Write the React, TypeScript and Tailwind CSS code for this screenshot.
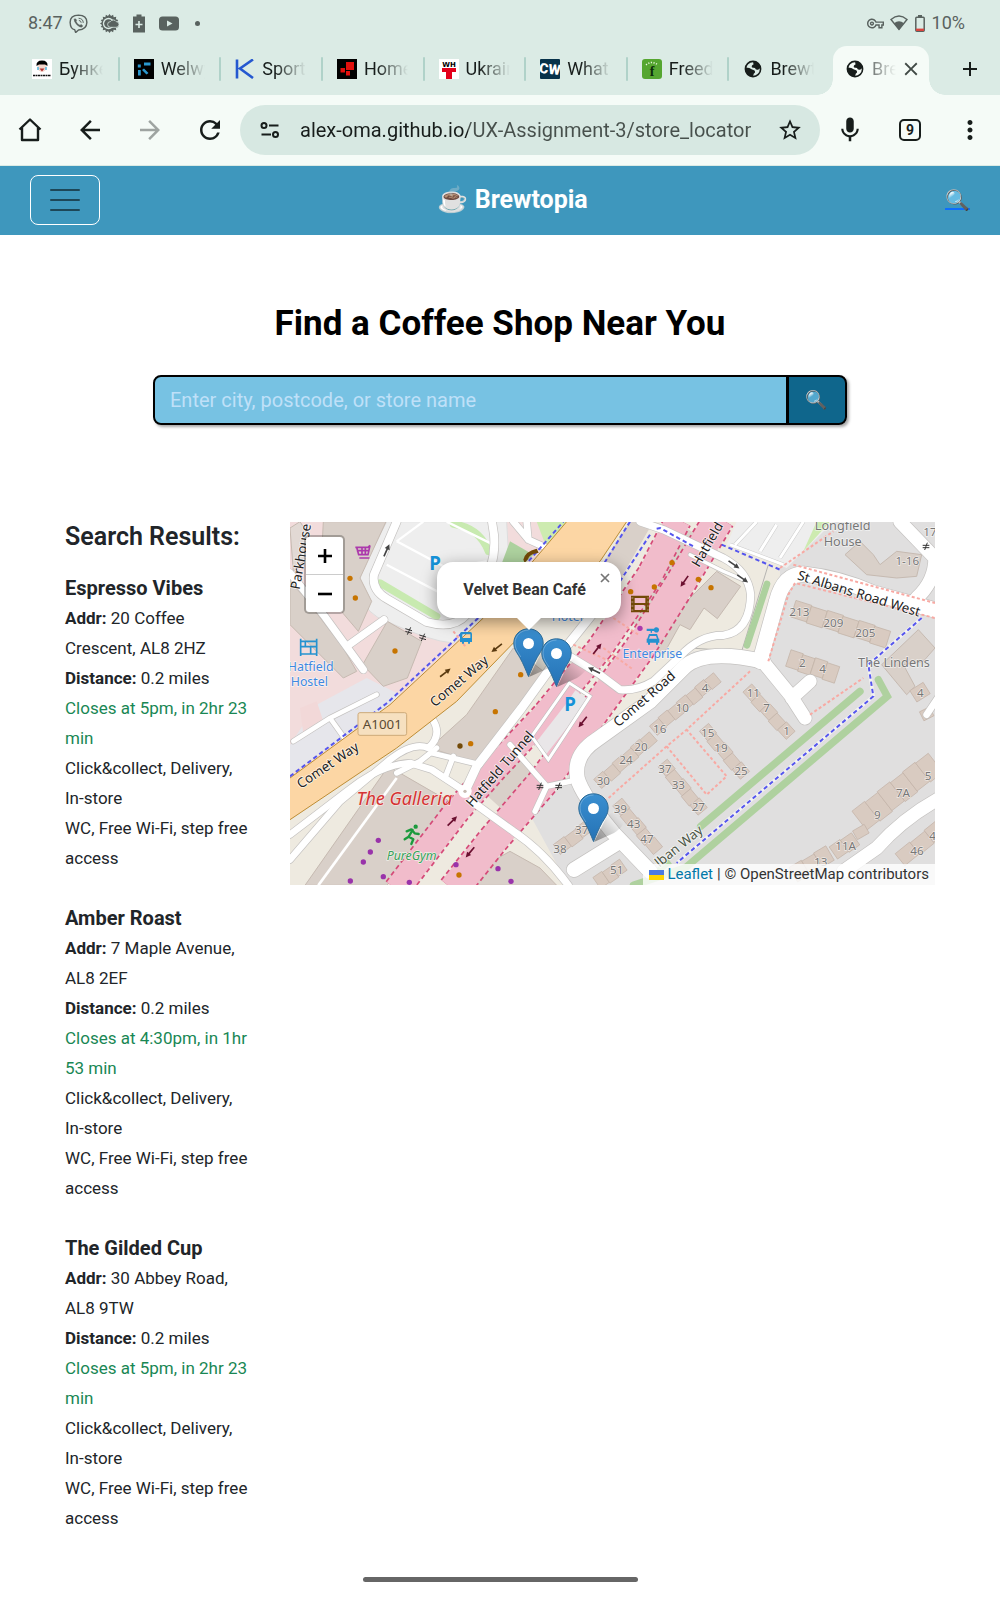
import type { ReactNode } from "react";
import {
  MdAdd,
  MdArrowBack,
  MdArrowForward,
  MdClose,
  MdMic,
  MdMoreVert,
  MdOutlineVpnKey,
  MdRefresh,
  MdStarBorder,
} from "react-icons/md";

/* ---------- Status bar ---------- */

const teeth = Array.from({ length: 32 }, (_, i) => {
  const r = i % 2 ? 8 : 10;
  const a = (i / 32) * Math.PI * 2;
  return `${(10 + r * Math.cos(a)).toFixed(1)},${(10 + r * Math.sin(a)).toFixed(1)}`;
}).join(" ");

function StatusBar() {
  return (
    <div className="flex h-[46px] items-center px-7 text-lg text-[#59625f]">
      <span>8:47</span>
      <svg className="ml-1.5 size-[19px]" viewBox="0 0 20 20" fill="none" stroke="currentColor" strokeWidth="1.500" strokeLinecap="round" strokeLinejoin="round">
        <path d="M6 16.500Q1.500 16 1.200 9Q1 1.500 10 1.200Q19 1.500 18.800 9Q18.500 16.500 10 16.800L7 19.500z" />
        <path d="M5.500 5.500Q7 4 8 6.500L7.500 8Q8.500 10.800 11.500 11.800L13 11Q15.500 12.500 13.500 13.800Q12 14.500 8.500 11.500Q5 8 5.500 5.500z" fill="currentColor" strokeWidth="0.500" />
        <path d="M10.500 4.500Q15 4.800 15 9M10.800 6.800Q12.800 7 12.800 8.800" strokeWidth="1" />
      </svg>
      <svg className="ml-3 size-[19px]" viewBox="0 0 20 20">
        <polygon points={teeth} fill="currentColor" />
        <circle cx="9" cy="10" r="6" fill="#dbebe5" />
        <circle cx="9" cy="10" r="4.600" fill="currentColor" />
        <path d="M8 11a3 3 0 0 1 3-3 3.500 3.500 0 0 1 6 0 3 3 0 0 1 0 6h-6a3 3 0 0 1-3-3z" fill="currentColor" stroke="#dbebe5" strokeWidth="0.800" />
      </svg>
      <svg className="ml-3.5 h-[19px] w-3" viewBox="0 0 12 18">
        <path d="M3.500 0h5v2H12v16H0V2h3.500z" fill="currentColor" />
        <path d="M6 6.500v7M2.500 10h7" stroke="#dbebe5" strokeWidth="1.600" />
      </svg>
      <svg className="ml-3.5 h-[15px] w-5" viewBox="0 0 20 14">
        <rect width="20" height="14" rx="3.500" fill="currentColor" />
        <path d="M8 4l5.500 3L8 10z" fill="#dbebe5" />
      </svg>
      <span className="ml-4 size-[5px] rounded-full bg-current" />
      <span className="flex-1" />
      <MdOutlineVpnKey className="size-[17px]" />
      <svg className="ml-1.5 h-4 w-[18px]" viewBox="0 0 18 16">
        <path d="M1 4.500Q9-2.500 17 4.500L9 14.500z" fill="none" stroke="currentColor" strokeWidth="1.400" />
        <path d="M4 8.200Q9 4.500 14 8.200L9 15z" fill="currentColor" />
      </svg>
      <svg className="mx-[7px] h-[17px] w-2.5" viewBox="0 0 10 17">
        <path d="M3 1h4" stroke="currentColor" strokeWidth="2" />
        <rect x="0.800" y="2.300" width="8.400" height="13.900" rx="1" fill="none" stroke="currentColor" strokeWidth="1.500" />
        <path d="M1 14.800h8" stroke="#d9453f" strokeWidth="2.400" />
      </svg>
      <span className="mr-[7px]">10%</span>
    </div>
  );
}

/* ---------- Tab strip ---------- */

function Globe() {
  return (
    <svg className="size-5" viewBox="0 0 20 20">
      <circle cx="10" cy="10" r="7.600" fill="none" stroke="currentColor" strokeWidth="1.600" />
      <path d="M10 2Q15.500 2.500 17.800 8.500L15.500 10.500Q12.500 11.500 12 9L9 8.500Q8 6.500 10.500 5.500z" fill="currentColor" />
      <path d="M2.500 8.500Q7 8.500 9 10.500Q12.500 11 12 13.500Q10.500 14 10 17.500Q4 17 2.500 12z" fill="currentColor" />
    </svg>
  );
}

const tabs: { title: string; icon: ReactNode }[] = [
  {
    title: "Бунке",
    icon: (
      <svg className="size-5" viewBox="0 0 20 20">
        <rect width="20" height="20" fill="#fff" />
        <ellipse cx="10" cy="8" rx="4.500" ry="5" fill="#f4d6cc" />
        <path d="M4.500 7Q4 1.500 10 1.500T15.500 7L13 5.500H7z" fill="#000" />
        <path d="M7.500 9.500h5L10 12.500z" fill="#b23030" />
        <path d="M6 8v3M14 8v3" stroke="#4db6e0" strokeWidth="1.500" />
        <path d="M1 16.500h18" stroke="#111" strokeWidth="1.600" strokeDasharray="2 .5" />
      </svg>
    ),
  },
  {
    title: "Welwy",
    icon: (
      <svg className="size-5" viewBox="0 0 20 20">
        <rect width="20" height="20" fill="#000" />
        <path d="M10 3.500h6.500v3H10zM4 11h2.800v5.500H4zM3.800 5.500h3v3h-3zM10 9.500l4.500 4.500-2 1.500L8 11z" fill="#2a98cf" />
      </svg>
    ),
  },
  {
    title: "Sport",
    icon: (
      <svg className="size-5" viewBox="0 0 20 20" fill="none" stroke="#2558d0" strokeWidth="2.600">
        <path d="M2 .5v19M18 .5L5 9.500l13 9.500" />
      </svg>
    ),
  },
  {
    title: "Home",
    icon: (
      <svg className="size-5" viewBox="0 0 20 20">
        <rect width="20" height="20" fill="#000" />
        <path d="M9 3h8v8H9zM3.500 9h4.500v4.500H3.500zM9 12h4v4.500H9z" fill="#e2100d" />
      </svg>
    ),
  },
  {
    title: "Ukrain",
    icon: (
      <svg className="size-5" viewBox="0 0 20 20">
        <rect width="20" height="20" fill="#fff" />
        <text x="10" y="7.500" textAnchor="middle" fontSize="7" fontWeight="900" fontFamily="DejaVu Sans, sans-serif">WH</text>
        <path d="M3 9h14v4h-4v7H7v-7H3z" fill="#e3001b" />
      </svg>
    ),
  },
  {
    title: "What",
    icon: (
      <svg className="size-5" viewBox="0 0 20 20">
        <rect width="20" height="20" rx="1" fill="#07324a" />
        <text x="10" y="15" textAnchor="middle" fontSize="14" fontWeight="900" fill="#fff" fontFamily="Roboto, sans-serif" transform="rotate(6 10 10)">CW</text>
      </svg>
    ),
  },
  {
    title: "Freed",
    icon: (
      <svg className="size-5" viewBox="0 0 20 20">
        <rect width="20" height="20" rx="3" fill="#55a630" />
        <path d="M4 6Q10 1 16 6" fill="none" stroke="#e8f5df" strokeWidth="1.500" strokeDasharray="1.200 1.500" />
        <text x="10" y="17" textAnchor="middle" fontSize="14" fontWeight="700" fill="#0d2b0b" fontFamily="Liberation Serif, serif">f</text>
      </svg>
    ),
  },
  { title: "Brewt", icon: <Globe /> },
];

function TabStrip() {
  return (
    <div className="flex h-[49px] items-stretch pl-[18px] text-lg text-[#171d1b]">
      {tabs.map((tab, i) => (
        <button key={i} className="flex min-w-0 flex-1 items-center pl-3.5 pb-1 text-left">
          <span className="mr-[7px] shrink-0">{tab.icon}</span>
          <span className="w-11 overflow-hidden whitespace-nowrap [mask-image:linear-gradient(to_right,black_30%,transparent)]">
            {tab.title}
          </span>
          {i < tabs.length - 1 && <span className="ml-auto h-6 w-[2px] rounded bg-[#b0d2c9]" />}
        </button>
      ))}
      <div className="flex w-[100px] items-stretch">
        <div className="relative mx-[2px] flex flex-1 items-center rounded-t-[14px] bg-[#f5fbf7] pl-3 pb-1">
          <span className="absolute bottom-0 -left-4 size-4 bg-[radial-gradient(circle_at_0_0,transparent_15.5px,#f5fbf7_16px)]" />
          <span className="absolute bottom-0 -right-4 size-4 bg-[radial-gradient(circle_at_100%_0,transparent_15.5px,#f5fbf7_16px)]" />
          <span className="mr-[7px] shrink-0">
            <Globe />
          </span>
          <span className="w-6 overflow-hidden whitespace-nowrap [mask-image:linear-gradient(to_right,rgba(0,0,0,.6),transparent)]">
            Bre
          </span>
          <button aria-label="Close tab" className="ml-1 text-[#404945]">
            <MdClose className="size-[22px]" />
          </button>
        </div>
      </div>
      <button aria-label="New tab" className="flex w-[69px] items-center justify-center pb-1 pl-2">
        <MdAdd className="size-6" />
      </button>
    </div>
  );
}

/* ---------- Address bar ---------- */

function Toolbar() {
  return (
    <div className="flex h-[70px] items-center bg-[#f5fbf7] text-[#171d1b]">
      <button aria-label="Home" className="flex w-[60px] justify-center">
        <svg className="size-[30px]" viewBox="0 0 30 30" fill="none" stroke="currentColor" strokeWidth="2.400" strokeLinejoin="round">
          <path d="M4.500 14.500L15 4.500l10.500 10" />
          <path d="M7 12.500V25h16V12.500" />
        </svg>
      </button>
      <button aria-label="Back" className="flex w-[60px] justify-center">
        <MdArrowBack className="size-[30px]" />
      </button>
      <button aria-label="Forward" className="flex w-[60px] justify-center text-[#9ea4a1]">
        <MdArrowForward className="size-[30px]" />
      </button>
      <button aria-label="Reload" className="flex w-[60px] justify-center">
        <MdRefresh className="size-[30px]" />
      </button>
      <div className="flex h-[50px] min-w-0 flex-1 items-center rounded-full bg-[#d7e8e2] pr-[17px] pl-5">
        <button aria-label="Site settings">
          <svg className="h-4 w-5" viewBox="0 0 20 16" fill="none" stroke="currentColor" strokeWidth="2">
            <circle cx="4" cy="3.500" r="2.500" />
            <path d="M9 3.500h9.500M1.500 12.500H11" />
            <circle cx="15.500" cy="12.500" r="2.500" />
          </svg>
        </button>
        <input
          aria-label="Address"
          readOnly
          value="alex-oma.github.io/UX-Assignment-3/store_locator"
          className="ml-5 min-w-0 flex-1 bg-linear-[to_right,#171d1b_168px,#47504c_168px] bg-clip-text text-xl text-transparent outline-none"
        />
        <button aria-label="Bookmark" className="ml-[23px]">
          <MdStarBorder className="size-[26px]" />
        </button>
      </div>
      <button aria-label="Voice search" className="flex w-[60px] justify-center">
        <MdMic className="size-[30px]" />
      </button>
      <button aria-label="Open tabs" className="flex w-[60px] justify-center">
        <span className="flex size-[22px] items-center justify-center rounded-[5px] border-2 border-current text-sm font-bold">9</span>
      </button>
      <button aria-label="More" className="flex w-[60px] justify-center">
        <MdMoreVert className="size-[30px]" />
      </button>
    </div>
  );
}

/* ---------- Site header and search ---------- */

function SiteHeader() {
  return (
    <header className="mt-px flex h-[69px] items-center justify-between bg-[#3e97bd] px-[30px] pb-0.5">
      <button aria-label="Menu" className="flex h-[50px] w-[70px] flex-col items-center justify-center gap-2 rounded-lg border border-white">
        <span className="h-0.5 w-[30px] rounded bg-[#1d4758]" />
        <span className="h-0.5 w-[30px] rounded bg-[#1d4758]" />
        <span className="h-0.5 w-[30px] rounded bg-[#1d4758]" />
      </button>
      <a href="#home" className="mr-5 text-[25px] font-bold whitespace-nowrap text-white">
        ☕ Brewtopia
      </a>
      <a href="#search" aria-label="Search" className="text-xl text-[#0d6efd] underline decoration-2">
        🔍
      </a>
    </header>
  );
}

function StoreSearch() {
  return (
    <section className="px-[153px] pt-[66px]">
      <h1 className="text-center text-[35px] leading-[46px] font-bold text-black">Find a Coffee Shop Near You</h1>
      <form className="mt-7 flex h-[50px] rounded-lg shadow-[2px_2px_3px_rgba(0,0,0,.35)]" onSubmit={(e) => e.preventDefault()}>
        <input
          aria-label="Enter city, postcode, or store name"
          placeholder="Enter city, postcode, or store name"
          className="min-w-0 flex-1 rounded-l-lg border-2 border-black bg-[#77c2e3] px-[15px] text-xl text-black outline-none placeholder:text-[#bfe0f8]"
        />
        <button aria-label="Search" className="w-[59px] rounded-r-lg border-2 border-l border-black bg-[#0f668c] text-lg">
          🔍
        </button>
      </form>
    </section>
  );
}

/* ---------- Results ---------- */

const stores = [
  { name: "Espresso Vibes", addr: "20 Coffee Crescent, AL8 2HZ", closes: "Closes at 5pm, in 2hr 23 min" },
  { name: "Amber Roast", addr: "7 Maple Avenue, AL8 2EF", closes: "Closes at 4:30pm, in 1hr 53 min" },
  { name: "The Gilded Cup", addr: "30 Abbey Road, AL8 9TW", closes: "Closes at 5pm, in 2hr 23 min" },
];

function Results() {
  return (
    <section>
      <h2 className="mb-[21px] text-[25px] leading-[30px] font-semibold whitespace-nowrap">Search Results:</h2>
      <ul className="flex flex-col gap-[30px] pr-2">
        {stores.map((s) => (
          <li key={s.name} className="text-[17px] leading-[30px]">
            <h3 className="text-xl leading-[30px] font-bold">{s.name}</h3>
            <p>
              <strong>Addr:</strong> {s.addr}
            </p>
            <p>
              <strong>Distance:</strong> 0.2 miles
            </p>
            <p className="text-[#198754]">{s.closes}</p>
            <p>
              Click&amp;collect, Delivery, <span className="whitespace-nowrap">In-store</span>
            </p>
            <p>WC, Free Wi-Fi, step free access</p>
          </li>
        ))}
      </ul>
    </section>
  );
}

/* ---------- Map ---------- */

type Line = [number, number, number, number];

/* A terrace of n houses along the line from (x1, y1) to (x2, y2). */
function Terrace({ at, w = 36, n = 5 }: { at: Line; w?: number; n?: number }) {
  const [x1, y1, x2, y2] = at;
  const len = Math.hypot(x2 - x1, y2 - y1);
  const angle = (Math.atan2(y2 - y1, x2 - x1) * 180) / Math.PI;
  return (
    <g transform={`translate(${x1} ${y1}) rotate(${angle})`} fill="#d9cbc1" stroke="#c2b2a7" strokeWidth="2">
      {Array.from({ length: n }, (_, i) => (
        <rect key={i} x={(i * len) / n} y={-w / 2 + (i % 2) * 3} width={len / n} height={w} />
      ))}
    </g>
  );
}

const terraces: { at: Line; w?: number; n?: number }[] = [
  { at: [1540, 282, 1825, 372], w: 52, n: 6 },
  { at: [1525, 430, 1672, 478], w: 52, n: 4 },
  { at: [1312, 488, 1120, 648], n: 7 },
  { at: [1120, 665, 955, 810], n: 6 },
  { at: [1402, 520, 1532, 662], n: 5 },
  { at: [1272, 638, 1395, 782], n: 5 },
  { at: [1148, 745, 1268, 890], n: 5 },
  { at: [1012, 862, 1134, 1008], n: 5 },
  { at: [830, 1005, 930, 930], n: 3 },
  { at: [950, 1105, 1030, 1050], w: 40, n: 3 },
  { at: [1738, 918, 1965, 742], w: 72, n: 6 },
  { at: [1660, 1015, 1725, 970], w: 44, n: 2 },
  { at: [1540, 1080, 1650, 1015], w: 50, n: 3 },
  { at: [1860, 1035, 1990, 930], w: 46, n: 3 },
  { at: [1725, 962, 1760, 942], w: 30, n: 1 },
  { at: [1900, 545, 1940, 520], w: 40, n: 1 },
  { at: [1925, 605, 1955, 590], w: 30, n: 1 },
];

const houseNumbers: [number, number, string][] = [
  [1558, 305, "213"], [1660, 338, "209"], [1756, 368, "205"], [1567, 457, "2"], [1628, 474, "4"],
  [1275, 533, "4"], [1207, 592, "10"], [1139, 655, "16"], [1083, 708, "20"], [1038, 749, "24"],
  [970, 811, "30"], [1420, 546, "11"], [1460, 591, "7"], [1520, 662, "1"], [1283, 667, "15"],
  [1323, 712, "19"], [1383, 782, "25"], [1155, 776, "37"], [1195, 822, "33"], [1255, 890, "27"],
  [1021, 895, "39"], [1061, 941, "43"], [1101, 985, "47"], [905, 958, "37"], [840, 1015, "38"],
  [1010, 1077, "51"], [1622, 1054, "13"], [1697, 1006, "11A"], [1792, 912, "9"], [1869, 846, "7A"],
  [1944, 796, "5"], [1911, 1020, "46"], [1958, 977, "4"], [1921, 548, "4"], [1882, 152, "1-16"], [1950, 64, "17"],
];

const poiDots: [number, number, string][] = [
  [210, 191, "#c77400"], [226, 250, "#c77400"], [345, 409, "#c77400"], [722, 480, "#c77400"],
  [646, 591, "#c77400"], [572, 687, "#c77400"], [540, 694, "#734a08"], [537, 1081, "#c77400"],
  [1176, 144, "#c77400"], [1255, 194, "#c77400"], [1293, 219, "#c77400"], [1123, 217, "#c77400"],
  [1052, 231, "#c77400"], [1080, 341, "#ac39ac"], [295, 977, "#93a"], [271, 1012, "#93a"], [250, 1042, "#93a"],
  [211, 1099, "#93a"], [310, 1086, "#93a"], [388, 1103, "#93a"], [528, 1050, "#93a"], [654, 1062, "#93a"], [693, 1100, "#93a"],
];

const arrows: [number, number, number, string][] = [
  [320, 107, -66, "#444"], [650, 400, 142, "#5a3a10"], [496, 474, -38, "#5a3a10"], [952, 402, -52, "#6b1030"],
  [942, 467, 205, "#444"], [1362, 150, 35, "#444"], [1388, 192, 35, "#444"], [1213, 200, 125, "#6b1030"],
  [908, 622, 128, "#6b1030"], [517, 919, -45, "#6b1030"], [570, 1013, 130, "#6b1030"],
];

const roads: [string, number][] = [
  ["M30 175L130 300L250 465M205 392L312 315", 22],
  ["M350 21L282 180Q274 225 320 252L440 322Q520 345 560 300L600 225Q650 150 642 60L636 21", 24],
  ["M700 21L745 75L800 100M745 75L740 21", 20],
  ["M150 610L200 680M150 610L40 680M150 610L290 540", 14],
  ["M30 960L200 830Q300 750 390 745L455 765L555 830", 20],
  ["M30 1035L180 860L330 735Q400 680 445 700Q490 660 455 610", 20],
  ["M350 775L420 740L470 700M455 715L600 750M520 725L495 790", 16],
  ["M960 270L840 420L725 580L590 755L555 830", 26],
  ["M575 860L700 950Q790 1010 865 1112", 22],
  ["M870 425L960 480L1020 525Q1070 530 1120 500L1200 425Q1260 360 1330 362Q1410 350 1412 240Q1405 170 1330 130L1150 45L1080 21", 22],
  ["M1230 120L1330 170L1400 200", 10],
  ["M690 690L800 815L870 800M800 815L765 890", 16],
  ["M1450 440Q1270 400 1210 460L1110 560L950 675Q880 720 892 790Q905 840 1000 955L1110 1070", 44],
  ["M882 1065L1020 980", 44],
  ["M1440 440L1490 260Q1510 180 1570 178Q1680 190 1780 235L1980 290", 46],
  ["M1440 430L1530 540L1575 610M1535 550L1590 500", 40],
  ["M1860 21L1965 130Q1965 200 1910 250", 40],
  ["M1980 850Q1870 910 1790 1000L1690 1070", 40],
  ["M1940 600L1980 540", 20],
];

const carriageways: [string, number][] = [
  ["M350 1125L530 890L640 765L795 600L960 400L1110 180L1195 15", 74],
  ["M520 1125L640 975L790 800L935 600L1080 400L1205 200L1318 10", 88],
];

function StreetMap() {
  return (
    <svg className="block h-full w-full" viewBox="30 21 1935 1091" preserveAspectRatio="xMidYMid slice" aria-hidden="true">
      <rect width="2000" height="1200" fill="#e0dfdf" />
      <polygon points="30,21 860,21 610,310 330,570 30,790" fill="#f2dcdc" />
      <polygon points="30,690 110,570 260,490 370,545 30,780" fill="#e6e6eb" />
      <polygon points="60,580 110,560 130,620 70,660" fill="#f2d8d8" />
      <polygon points="30,915 530,560 1040,21 1500,21 1500,200 1440,420 1240,410 960,660 880,700 860,800 750,900 865,1112 30,1112" fill="#eeeae0" />
      <polygon points="1120,21 1000,230 930,300 870,300 1050,21" fill="#d9d0c9" />

      {/* car park */}
      <path d="M240 180L240 240Q260 300 320 320Q450 380 520 385Q590 350 690 200L680 21H320z" fill="#eeeeee" stroke="#ddd" strokeWidth="3" />
      <g stroke="#c8eab0" strokeWidth="22" strokeLinecap="round" fill="none">
        <path d="M300 205L470 305M520 28Q600 40 625 110" />
      </g>
      <g stroke="#fff" strokeWidth="7" fill="none">
        <path d="M350 80L500 160L620 140M320 150L500 245L560 250M430 21L350 80M500 21L640 90" />
      </g>
      <polygon points="690,80 760,120 720,160 660,160" fill="#add19e" />
      <polygon points="770,21 860,21 800,100" fill="#cdebb0" />

      {/* large buildings */}
      <g fill="#d9d0c9" stroke="#c6bab1" strokeWidth="3">
        <polygon points="130,21 318,21 240,190 275,260 235,350 120,215" />
        <polygon points="30,200 75,250 190,400 230,470 190,490 30,330" />
        <polygon points="322,320 425,380 382,490 310,515 248,450" />
        <polygon points="30,40 60,21 110,100 40,170" fill="#e2d9d4" />
        <polygon points="700,400 790,470 820,450 590,745 450,700 560,600" />
        <polygon points="325,755 455,830 545,880 430,1000 320,1112 75,1112" />
        <polygon points="690,1010 780,1060 830,1112 560,1112 600,1060" />
        <polygon points="1310,170 1382,215 1312,312 1272,280 1230,345 1200,330 1150,420 1100,380" />
        <polygon points="1740,80 1780,120 1800,150 1850,110 1925,120 1910,185 1850,190 1760,180 1695,120" />
        <polygon points="1805,450 1915,345 1965,400 1930,440 1870,450 1905,515 1880,540" />
      </g>
      <path d="M350 790L115 1112" stroke="#fff" strokeWidth="8" />
      <path d="M740 750L640 860M1250 60L1080 340" stroke="#d9d0c9" strokeWidth="70" />

      {/* car parks and grass to the north-east */}
      <path d="M1370 21H1660L1520 160L1340 90z" fill="#eeeeee" />
      <path d="M1430 21L1365 90M1490 30L1440 110M1570 21L1500 130M1350 90L1510 150" stroke="#ccc" strokeWidth="12" />
      <path d="M1430 21L1365 90M1490 30L1440 110M1570 21L1500 130M1350 90L1510 150" stroke="#fff" strokeWidth="9" />
      <path d="M1570 110L1650 21H1610z" fill="#cdebb0" />
      <path d="M1465 150L1385 410L1230 400" fill="none" stroke="#999" strokeWidth="2" />
      <path d="M1461 208L1401 392" stroke="#add19e" strokeWidth="20" strokeLinecap="round" />
      <g stroke="#afd19f" strokeWidth="22" fill="none" strokeLinecap="round">
        <path d="M1740 530L1262 935M1795 495L1822 545L1215 1060L1060 1112" />
      </g>
      <path d="M1170 1040L1080 1112" stroke="#afd19f" strokeWidth="18" />

      {terraces.map((t, i) => (
        <Terrace key={i} {...t} />
      ))}

      {/* tunnel carriageways */}
      <g fill="none">
        {carriageways.map(([d, w], i) => (
          <g key={i}>
            <path d={d} stroke="#d54a78" strokeWidth={w + 10} strokeDasharray="14 10" />
            <path d={d} stroke="#f1bccb" strokeWidth={w} />
          </g>
        ))}
        <path d="M780 705L870 590L905 540" stroke="#e9e6e8" strokeWidth="46" />
        <path d="M755 665L805 735L930 545L868 505z" stroke="#bbb" strokeWidth="12" />
        <path d="M755 665L805 735L930 545L868 505z" stroke="#fff" strokeWidth="9" />
      </g>

      {/* minor roads */}
      <g fill="none" strokeLinecap="round" strokeLinejoin="round">
        {roads.map(([d, w], i) => (
          <path key={i} d={d} stroke="#c4c2c0" strokeWidth={w + 4} />
        ))}
        {roads.map(([d, w], i) => (
          <path key={i} d={d} stroke="#fff" strokeWidth={w} />
        ))}
        <circle cx="555" cy="830" r="20" fill="#fff" />
        <circle cx="555" cy="830" r="5" fill="#c6bab1" />
      </g>

      {/* main road */}
      <polygon points="30,790 330,570 610,310 720,185 860,21 1040,21 960,140 700,385 530,560 350,700 30,915" fill="#fcd6a4" />
      <path d="M30 790L330 570L610 310L720 185L860 21M30 915L350 700L530 560L700 385L960 140L1040 21" fill="none" stroke="#bd8d35" strokeWidth="3" />

      {/* cycle ways and footpaths */}
      <g fill="none" strokeWidth="6">
        <path d="M1925 310L1765 450L1780 545L1190 1045" stroke="#fff" strokeOpacity=".6" strokeWidth="10" />
        <path d="M30 785L325 562L600 305L850 21M1050 21L970 150M1110 60L1020 200M1130 42L1140 40L1240 95M1325 90L1500 165M1925 310L1765 450L1780 545L1190 1045" stroke="#5555ee" strokeDasharray="13 9" />
        <path d="M1500 160L1660 50M1540 150L1965 265M1465 440L1525 240L1545 205L1965 310M1410 470L1220 645L1340 785L1280 840L1160 695L1220 645M1160 695L980 855M1590 600L1750 490M520 350L560 400M880 390L990 440M1000 310L1075 360M970 400L1060 465" stroke="#f8a9a3" strokeWidth="6" strokeDasharray="9 7" />
      </g>

      {poiDots.map(([x, y, c], i) => (
        <circle key={i} cx={x} cy={y} r="8" fill={c} />
      ))}
      {arrows.map(([x, y, a, c], i) => (
        <path key={i} transform={`translate(${x} ${y}) rotate(${a})`} d="M-20-2.500H4V-8L20 0 4 8V2.500H-20z" fill={c} />
      ))}
      <g stroke="#333" strokeWidth="3">
        <path d="M376 342l20 6M376 350l20 6M392 338l-10 22M418 361l20 6M418 369l20 6M434 357l-10 22M770 812h20M770 819h20M784 804l-8 22M826 812h20M826 819h20M840 804l-8 22M1928 92h20M1928 99h20M1942 84l-8 22" />
      </g>

      {/* amenity symbols */}
      <g fill="none" stroke="#ac39ac" strokeWidth="5">
        <path d="M226 98h38l6-6M230 98l6 22h28l6-28M230 108h36M246 98v22M256 98v22M238 130h30" />
      </g>
      <g fill="none" stroke="#2592d0" strokeWidth="5">
        <path d="M62 372v52M110 372v52M62 380h48M62 396h48M62 418h48M76 380v16M92 396v22" />
      </g>
      <g fill="#2592d0">
        <path d="M545 352h26q5 0 5 6v24h-6v5h-6v-5h-12v5h-6v-5h-6v-24q0-6 5-6zm2 7v11h24v-11z" />
        <path d="M1102 372l5-14h24l5 14h2v12h-4v6h-6v-6h-18v6h-6v-6h-4v-12zM1110 364l-3 8h24l-3-8z" fillRule="evenodd" />
        <path d="M1100 342h22a8 8 0 1 1 0 7h-6v5h-4v-5h-12z" />
      </g>
      <g fill="#734a08">
        <path d="M1053 243h54v50h-54zM1064 250v15h32v-15zM1064 271v15h32v-15z" fillRule="evenodd" />
        <path d="M1054 250h52M1054 262h52M1054 274h52M1054 286h52" stroke="#e8c9c9" strokeWidth="2" strokeDasharray="6 42" />
        <path d="M730 135Q735 110 770 102l6 12-16 4q-14 6-16 16l-10 10z" />
      </g>
      <g fill="none" stroke="#1a9a3c" strokeWidth="7" strokeLinecap="round" strokeLinejoin="round">
        <circle cx="407" cy="936" r="3" />
        <path d="M398 946l-12 20 14 8-6 14M386 966l-12 8M380 950l14-6 10 12 12 2" />
      </g>

      {/* labels */}
      <g fontFamily="'Noto Sans', sans-serif" textAnchor="middle">
        <rect x="234" y="594" width="146" height="68" rx="6" fill="#f6e0c0" stroke="#cdaa7a" strokeWidth="3" />
        <text x="307" y="643" fontSize="40" fill="#5a4a33">A1001</text>
        <g fill="#777" stroke="#fff" strokeOpacity=".6" strokeWidth="4" paintOrder="stroke">
          <g fontSize="35">
            {houseNumbers.map(([x, y, t], i) => (
              <text key={i} x={x} y={y}>{t}</text>
            ))}
          </g>
          <g fontSize="38">
            <text x="1688" y="46">Longfield</text>
            <text x="1688" y="94">House</text>
            <text x="1842" y="456">The Lindens</text>
          </g>
        </g>
        <g fontSize="40" fill="#222" stroke="#fff" strokeOpacity=".7" strokeWidth="5" paintOrder="stroke">
          <text transform="translate(76 128) rotate(-80)">Parkhouse</text>
          <text transform="translate(546 510) rotate(-40)">Comet Way</text>
          <text transform="translate(151 763) rotate(-34)">Comet Way</text>
          <text transform="translate(670 772) rotate(-49)">Hatfield Tunnel</text>
          <text transform="translate(1294 96) rotate(-60)">Hatfield</text>
          <text transform="translate(1102 563) rotate(-41)">Comet Road</text>
          <text transform="translate(1733 250) rotate(17)">St Albans Road West</text>
          <text transform="translate(1205 1005) rotate(-39)" fill="#4b5546">lban Way</text>
        </g>
        <g fontSize="37" fill="#3f88e0" stroke="#fff" strokeOpacity=".7" strokeWidth="4" paintOrder="stroke">
          <text x="92" y="469">Hatfield</text>
          <text x="88" y="513">Hostel</text>
          <text x="862" y="318">Hotel</text>
          <text x="1117" y="430">Enterprise</text>
        </g>
        <g fontSize="56" fontWeight="700" fill="#1592d8">
          <text x="465" y="165">P</text>
          <text x="870" y="588">P</text>
        </g>
        <text x="373" y="872" fontSize="54" fontStyle="italic" fill="#d43334" stroke="#f5e5e0" strokeWidth="4" paintOrder="stroke">The Galleria</text>
        <text x="395" y="1036" fontSize="37" fontStyle="italic" fill="#37a05a" stroke="#f0f0e8" strokeWidth="4" paintOrder="stroke">PureGym</text>
      </g>
    </svg>
  );
}

function Pin({ place, label }: { place: string; label: string }) {
  return (
    <button aria-label={label} className={`absolute -mt-[50px] -ml-4 h-[50px] w-[31px] ${place}`}>
      <svg className="block h-full w-full overflow-visible" viewBox="0 0 31 50">
        <defs>
          <linearGradient id="pin" x1="0" y1="0" x2="0" y2="1">
            <stop offset="0" stopColor="#3a8fd0" />
            <stop offset="1" stopColor="#2572b5" />
          </linearGradient>
          <linearGradient id="pinShadow" x1="0" y1="1" x2="1" y2="0">
            <stop offset="0.100" stopColor="#000" stopOpacity="0.350" />
            <stop offset="0.800" stopColor="#000" stopOpacity="0" />
          </linearGradient>
        </defs>
        <path d="M16 49L28 25Q37 14 44 22T36 40z" fill="url(#pinShadow)" />
        <path d="M15.500.8C7 .8.8 7.200.8 15c0 6.500 3.200 9.500 6 14.500 3.700 6.500 6 12.500 8.700 19 2.700-6.500 5-12.500 8.700-19 2.800-5 6-8 6-14.500C30.200 7.200 24 .8 15.500.8z" fill="url(#pin)" stroke="#2e6c97" />
        <path d="M15.500 2C8 2 2 8 2 15c0 6 3 9 5.800 14" fill="none" stroke="#fff" strokeOpacity=".25" />
        <circle cx="15.500" cy="15.500" r="5.500" fill="#fff" />
      </svg>
    </button>
  );
}

function StoreMap() {
  return (
    <section aria-label="Store map" className="relative col-span-3 aspect-[645/363] self-start overflow-hidden">
      <StreetMap />
      <Pin label="Velvet Bean Café" place="left-[37%] top-[43%]" />
      <Pin label="Espresso Vibes" place="left-[41.4%] top-[45.6%]" />
      <Pin label="Amber Roast" place="left-[47.2%] top-[88.3%]" />

      <div className="absolute top-[13px] left-[14px] flex w-[41px] flex-col rounded-[5px] border-2 border-black/25 bg-white bg-clip-padding">
        <button aria-label="Zoom in" className="flex h-[38px] items-center justify-center border-b border-[#ccc]">
          <svg className="size-3.5" viewBox="0 0 14 14" stroke="#000" strokeWidth="2.600"><path d="M0 7h14M7 0v14" /></svg>
        </button>
        <button aria-label="Zoom out" className="flex h-[37px] items-center justify-center">
          <svg className="size-3.5" viewBox="0 0 14 14" stroke="#000" strokeWidth="2.600"><path d="M0 7h14" /></svg>
        </button>
      </div>

      <div className="absolute top-[11%] left-[37%] flex h-14 w-[184px] -translate-x-1/2 items-center justify-center rounded-2xl bg-white text-[#333] shadow-[0_4px_16px_rgba(0,0,0,.4)]">
        <strong className="pr-2 text-base">Velvet Bean Café</strong>
        <button aria-label="Close popup" className="absolute top-[11px] right-[11px] text-[#757575]">
          <svg className="size-2.5" viewBox="0 0 10 10" stroke="currentColor" strokeWidth="1.700"><path d="M1 1l8 8M9 1l-8 8" /></svg>
        </button>
        <svg className="absolute top-full left-1/2 h-3 w-6 -translate-x-1/2" viewBox="0 0 24 12"><path d="M0 0h24L12 12z" fill="#fff" /></svg>
      </div>

      <p className="absolute right-0 bottom-0 flex h-[21px] items-center bg-white/80 px-1.5 text-[15px] whitespace-nowrap text-[#333]">
        <svg className="mr-[3px] h-2.5 w-[15px]" viewBox="0 0 15 10"><path d="M0 0h15v5H0z" fill="#4c7be1" /><path d="M0 5h15v5H0z" fill="#ffd500" /></svg>
        <a href="#leaflet" className="mr-1 text-[#0078a8]">Leaflet</a>| © OpenStreetMap contributors
      </p>
    </section>
  );
}

export default function App() {
  return (
    <div className="flex min-h-screen flex-col bg-white font-[Roboto,'Noto_Color_Emoji',sans-serif] text-[#212529]">
      <div className="bg-[#dbebe5]">
        <StatusBar />
        <TabStrip />
        <Toolbar />
        <SiteHeader />
      </div>
      <main className="flex-1">
        <StoreSearch />
        <div className="mt-[97px] grid grid-cols-4 gap-[30px] px-[65px]">
          <Results />
          <StoreMap />
        </div>
      </main>
      <div className="mx-auto mb-[18px] h-[5px] w-[275px] rounded-full bg-[#666]" />
    </div>
  );
}
